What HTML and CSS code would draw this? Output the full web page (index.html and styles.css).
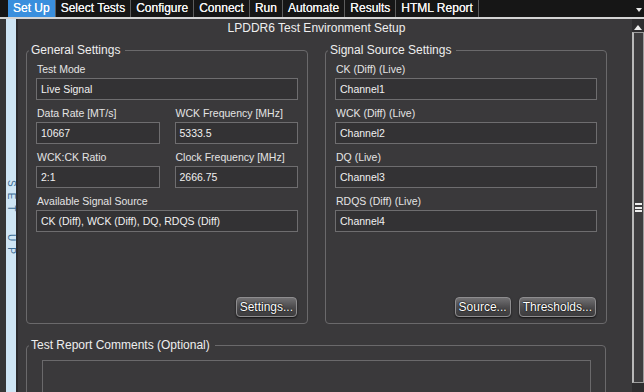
FILE: index.html
```html
<!DOCTYPE html>
<html>
<head>
<meta charset="utf-8">
<link rel="stylesheet" href="styles.css">
</head>
<body>
<div class="app">
  <div class="tabbar">
    <div class="tab active">Set Up</div>
    <div class="tab">Select Tests</div>
    <div class="tab">Configure</div>
    <div class="tab">Connect</div>
    <div class="tab">Run</div>
    <div class="tab">Automate</div>
    <div class="tab">Results</div>
    <div class="tab">HTML Report</div>
    <div class="tab-overflow">
      <svg width="6" height="4" viewBox="0 0 6 4"><path d="M0 0 L6 0 L3 4 Z" fill="#e8e8e8"/></svg>
    </div>
  </div>
  <div class="main">
    <div class="sidetab"><span class="sidetab-text">SET UP</span></div>
    <div class="panel">
      <div class="content">
        <div class="page-title">LPDDR6 Test Environment Setup</div>
        <div class="groups">
          <fieldset class="group">
            <legend>General Settings</legend>
            <div class="stack">
              <div class="field">
                <div class="label">Test Mode</div>
                <div class="input">Live Signal</div>
              </div>
              <div class="row2">
                <div class="field">
                  <div class="label">Data Rate [MT/s]</div>
                  <div class="input">10667</div>
                </div>
                <div class="field">
                  <div class="label">WCK Frequency [MHz]</div>
                  <div class="input">5333.5</div>
                </div>
              </div>
              <div class="row2">
                <div class="field">
                  <div class="label">WCK:CK Ratio</div>
                  <div class="input">2:1</div>
                </div>
                <div class="field">
                  <div class="label">Clock Frequency [MHz]</div>
                  <div class="input">2666.75</div>
                </div>
              </div>
              <div class="field">
                <div class="label">Available Signal Source</div>
                <div class="input">CK (Diff), WCK (Diff), DQ, RDQS (Diff)</div>
              </div>
            </div>
            <div class="btnrow">
              <button class="btn">Settings...</button>
            </div>
          </fieldset>
          <fieldset class="group">
            <legend>Signal Source Settings</legend>
            <div class="stack">
              <div class="field">
                <div class="label">CK (Diff) (Live)</div>
                <div class="input">Channel1</div>
              </div>
              <div class="field">
                <div class="label">WCK (Diff) (Live)</div>
                <div class="input">Channel2</div>
              </div>
              <div class="field">
                <div class="label">DQ (Live)</div>
                <div class="input">Channel3</div>
              </div>
              <div class="field">
                <div class="label">RDQS (Diff) (Live)</div>
                <div class="input">Channel4</div>
              </div>
            </div>
            <div class="btnrow">
              <button class="btn">Source...</button>
              <button class="btn">Thresholds...</button>
            </div>
          </fieldset>
        </div>
        <fieldset class="group comments">
          <legend>Test Report Comments (Optional)</legend>
          <div class="textarea"></div>
        </fieldset>
      </div>
    </div>
    <div class="scrollbar">
      <div class="sb-up"></div>
      <div class="sb-thumb"><div class="grip"></div></div>
    </div>
  </div>
</div>
</body>
</html>
```
FILE: styles.css
```css
* {
  box-sizing: border-box;
  margin: 0;
  padding: 0;
}

html, body {
  width: 644px;
  height: 392px;
  overflow: hidden;
}

body {
  background: #3a393b;
  font-family: "Liberation Sans", Arial, sans-serif;
  color: #e8e8e8;
}

.app {
  display: flex;
  flex-direction: column;
  height: 392px;
}

/* ---------- top tab bar ---------- */
.tabbar {
  flex: none;
  display: flex;
  height: 19px;
  padding-left: 8px;
  background: #161616;
  border-bottom: 2px solid #d4d4d4;
}

.tab {
  padding: 0 5px;
  font-size: 12px;
  line-height: 17px;
  color: #f4f4f4;
  border-right: 1px solid #5c5c5c;
  white-space: nowrap;
  text-shadow: 0 0 0.4px #ffffff;
}

.tab.active {
  background: #3a8fdd;
  color: #ffffff;
}

.tab-overflow {
  margin-left: auto;
  padding: 7px 2px 0 0;
  line-height: 0;
}

/* ---------- main area ---------- */
.main {
  flex: 1;
  display: flex;
  min-height: 0;
}

.sidetab {
  flex: none;
  width: 18px;
  display: flex;
  justify-content: center;
  align-items: flex-start;
  background: #cfe6f5;
  border-left: 6px solid #373737;
  border-right: 2px solid #2b2a2c;
}

.sidetab-text {
  margin-top: 161px;
  writing-mode: vertical-rl;
  font-size: 10px;
  letter-spacing: 6px;
  word-spacing: 8px;
  color: #3d6e95;
}

.panel {
  flex: 1;
  min-width: 0;
  padding: 1px 0 0 8px;
  background: #3a393b;
}

.content {
  width: 581px;
}

.page-title {
  text-align: center;
  font-size: 12px;
  line-height: 16px;
  color: #efefef;
}

.groups {
  display: flex;
  gap: 17px;
  margin-top: 7px;
}

/* ---------- group boxes ---------- */
.group {
  width: 282px;
  min-width: 0;
  margin: 0;
  padding: 4px 9px 6px 9px;
  border: 1px solid #6a696b;
  border-radius: 4px;
}

.group legend {
  margin-left: -7px;
  padding: 0 5px 0 2px;
  font-size: 12px;
  line-height: 14px;
  color: #eeeeee;
}

.stack {
  display: flex;
  flex-direction: column;
  gap: 5px;
}

.row2 {
  display: grid;
  grid-template-columns: 1fr 1fr;
  column-gap: 15px;
}

.label {
  padding-left: 1px;
  font-size: 10.5px;
  line-height: 17px;
  color: #e4e4e4;
  white-space: nowrap;
}

.input {
  height: 22px;
  padding: 0 4px;
  border: 1px solid #6e6d6f;
  background: #333234;
  font-size: 10.5px;
  line-height: 20px;
  color: #f0f0f0;
  white-space: nowrap;
  overflow: hidden;
}

.btnrow {
  display: flex;
  justify-content: flex-end;
  gap: 8px;
  margin-top: 65px;
  padding-right: 1px;
}

.btn {
  height: 20px;
  padding: 0 3px;
  font-family: "Liberation Sans", Arial, sans-serif;
  font-size: 12px;
  color: #ffffff;
  background: linear-gradient(#727173, #4d4c4e 50%, #3c3b3d);
  border: 1px solid #8e8d8f;
  border-radius: 4px;
  box-shadow: 0 1px 2px rgba(0, 0, 0, 0.7);
  text-shadow: 0 0 2px #000, 0 0 1px #000;
}

.comments {
  width: 580px;
  margin-top: 14px;
  padding: 8px 14px 0 15px;
}

.comments legend {
  margin-left: -13px;
  padding: 0 5px 0 2px;
}

.textarea {
  height: 60px;
  border: 1px solid #6a696b;
  background: #3a393b;
}

/* ---------- scrollbar ---------- */
.scrollbar {
  flex: none;
  width: 12px;
  display: flex;
  flex-direction: column;
  align-items: center;
  background: #2e2d2f;
}

.sb-up {
  margin-top: 6px;
  width: 0;
  height: 0;
  border-left: 4px solid transparent;
  border-right: 4px solid transparent;
  border-bottom: 5px solid #eeeeee;
}

.sb-thumb {
  margin-top: 2px;
  width: 12px;
  height: 351px;
  display: flex;
  align-items: center;
  justify-content: center;
  background: #3d3c3e;
  border: 1px solid #9c9c9c;
  border-left: 2px solid #b8b8b8;
}

.grip {
  width: 7px;
  height: 9px;
  background: repeating-linear-gradient(#eeeeee 0 2px, transparent 2px 3.5px);
}
```
